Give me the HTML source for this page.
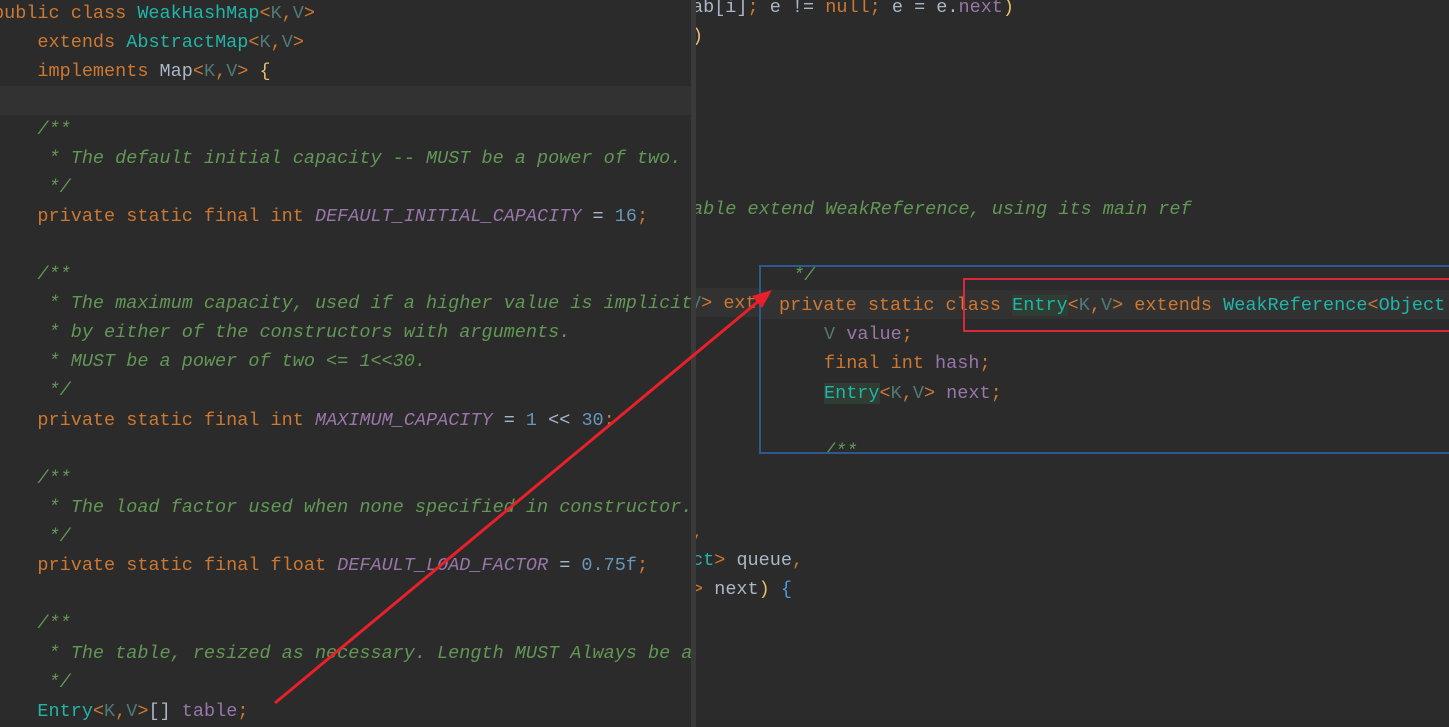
<!DOCTYPE html><html><head><style>
body{margin:0;width:1449px;height:727px;background:#2b2b2b;overflow:hidden;position:relative;font-family:"Liberation Mono",monospace;font-size:18.5px;color:#a9b7c6}
.l{position:absolute;white-space:pre;height:29px;line-height:29px;margin-top:2px}
.k{color:#cc7832}.c{color:#1fb5a8}.t{color:#507874}.g{color:#629755;font-style:italic}.p{color:#9876aa;font-style:italic}.n{color:#6897bb}.f{color:#9876aa}.y{color:#e8bf6a}.b{color:#4a9de0}
#L{position:absolute;left:0;top:0;width:692px;height:727px;overflow:hidden}
#R{position:absolute;left:696px;top:0;width:753px;height:727px;overflow:hidden;background:#2b2b2b}
#div{position:absolute;left:691px;top:0;width:5px;height:727px;background:#3a3a3a}
</style></head><body>
<div id="L">
<div style="position:absolute;left:0;top:86px;width:692px;height:29px;background:#323232"></div>
<div class="l" style="left:-7px;top:-3px"><span class="k">public class </span><span class="c">WeakHashMap</span><span class="k">&lt;</span><span class="t">K</span><span class="k">,</span><span class="t">V</span><span class="k">&gt;</span></div>
<div class="l" style="left:-7px;top:26px">    <span class="k">extends </span><span class="c">AbstractMap</span><span class="k">&lt;</span><span class="t">K</span><span class="k">,</span><span class="t">V</span><span class="k">&gt;</span></div>
<div class="l" style="left:-7px;top:55px">    <span class="k">implements </span>Map<span class="k">&lt;</span><span class="t">K</span><span class="k">,</span><span class="t">V</span><span class="k">&gt; </span><span class="y">{</span></div>
<div class="l g" style="left:-7px;top:113px">    /**</div>
<div class="l g" style="left:-7px;top:142px">     * The default initial capacity -- MUST be a power of two.</div>
<div class="l g" style="left:-7px;top:171px">     */</div>
<div class="l" style="left:-7px;top:200px">    <span class="k">private static final int </span><span class="p">DEFAULT_INITIAL_CAPACITY</span> = <span class="n">16</span><span class="k">;</span></div>
<div class="l g" style="left:-7px;top:258px">    /**</div>
<div class="l g" style="left:-7px;top:287px">     * The maximum capacity, used if a higher value is implicitly</div>
<div class="l g" style="left:-7px;top:316px">     * by either of the constructors with arguments.</div>
<div class="l g" style="left:-7px;top:345px">     * MUST be a power of two &lt;= 1&lt;&lt;30.</div>
<div class="l g" style="left:-7px;top:374px">     */</div>
<div class="l" style="left:-7px;top:404px">    <span class="k">private static final int </span><span class="p">MAXIMUM_CAPACITY</span> = <span class="n">1</span> &lt;&lt; <span class="n">30</span><span class="k">;</span></div>
<div class="l g" style="left:-7px;top:462px">    /**</div>
<div class="l g" style="left:-7px;top:491px">     * The load factor used when none specified in constructor.</div>
<div class="l g" style="left:-7px;top:520px">     */</div>
<div class="l" style="left:-7px;top:549px">    <span class="k">private static final float </span><span class="p">DEFAULT_LOAD_FACTOR</span> = <span class="n">0.75f</span><span class="k">;</span></div>
<div class="l g" style="left:-7px;top:607px">    /**</div>
<div class="l g" style="left:-7px;top:637px">     * The table, resized as necessary. Length MUST Always be a</div>
<div class="l g" style="left:-7px;top:666px">     */</div>
<div class="l" style="left:-7px;top:695px">    <span class="c">Entry</span><span class="k">&lt;</span><span class="t">K</span><span class="k">,</span><span class="t">V</span><span class="k">&gt;</span>[] <span class="f">table</span><span class="k">;</span></div>
</div>
<div id="div"></div>
<div id="R">
<div class="l" style="left:-4px;top:-9px">ab[i]<span class="k">;</span> e != <span class="k">null;</span> e = e.<span class="f">next</span><span class="y">)</span></div>
<div class="l y" style="left:-4px;top:20px">)</div>
<div class="l g" style="left:-4px;top:193px">able extend WeakReference, using its main ref</div>
<div style="position:absolute;left:0;top:288px;width:70px;height:29px;background:#323232"></div>
<div class="l" style="left:-6px;top:287px"><span class="t">V</span><span class="k">&gt; ext</span></div>
<div class="l k" style="left:-4px;top:516px">,</div>
<div class="l" style="left:-4px;top:544px"><span class="c">ct</span><span class="k">&gt; </span>queue<span class="k">,</span></div>
<div class="l" style="left:-4px;top:573px"><span class="k">&gt; </span>next<span class="y">)</span> <span class="b">{</span></div>
</div>
<div style="position:absolute;left:759px;top:265px;width:700px;height:189px;background:#2b2b2b;border:2px solid #2d5a8a;box-sizing:border-box;overflow:hidden">
<div style="position:absolute;left:0;top:23px;width:700px;height:29px;background:#323232"></div>
<div class="l g" style="left:32px;top:-8px">*/</div>
<div class="l" style="left:18px;top:22px"><span class="k">private static class </span><span class="c" style="background:#2f3d33">Entry</span><span class="k">&lt;</span><span class="t">K</span><span class="k">,</span><span class="t">V</span><span class="k">&gt; extends </span><span class="c">WeakReference</span><span class="k">&lt;</span><span class="c">Object</span></div>
<div class="l" style="left:63px;top:51px"><span class="t">V</span> <span class="f">value</span><span class="k">;</span></div>
<div class="l" style="left:63px;top:80px"><span class="k">final int </span><span class="f">hash</span><span class="k">;</span></div>
<div class="l" style="left:63px;top:110px"><span class="c" style="background:#2f3d33">Entry</span><span class="k">&lt;</span><span class="t">K</span><span class="k">,</span><span class="t">V</span><span class="k">&gt; </span><span class="f">next</span><span class="k">;</span></div>
<div class="l g" style="left:63px;top:168px">/**</div>
</div>
<div style="position:absolute;left:963px;top:278px;width:495px;height:54px;border:2px solid #d8283a;box-sizing:border-box"></div>
<svg style="position:absolute;left:0;top:0" width="1449" height="727"><line x1="275" y1="703" x2="760" y2="300" stroke="#e8202a" stroke-width="3"/><polygon points="772,290 752,296 762,308" fill="#e8202a"/></svg>
</body></html>
